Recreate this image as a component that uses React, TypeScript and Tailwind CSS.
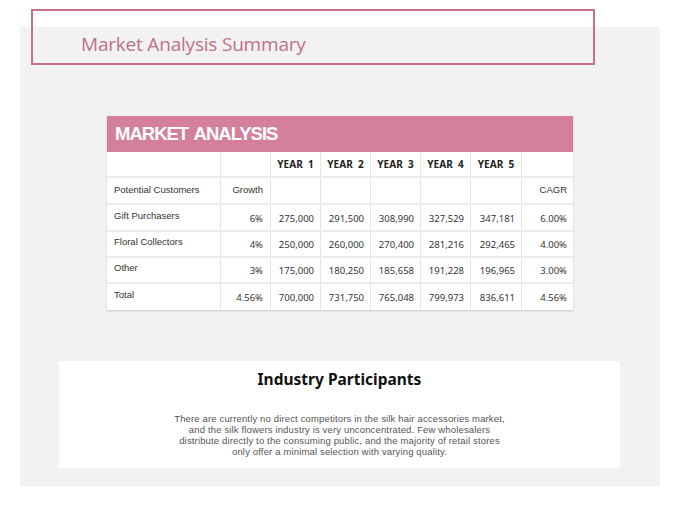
import React from 'react'

const years = ['YEAR 1', 'YEAR 2', 'YEAR 3', 'YEAR 4', 'YEAR 5']

const rows = [
  { name: 'Gift Purchasers', growth: '6%', values: ['275,000', '291,500', '308,990', '327,529', '347,181'], cagr: '6.00%' },
  { name: 'Floral Collectors', growth: '4%', values: ['250,000', '260,000', '270,400', '281,216', '292,465'], cagr: '4.00%' },
  { name: 'Other', growth: '3%', values: ['175,000', '180,250', '185,658', '191,228', '196,965'], cagr: '3.00%' },
  { name: 'Total', growth: '4.56%', values: ['700,000', '731,750', '765,048', '799,973', '836,611'], cagr: '4.56%' },
]

const cols = 'grid grid-cols-[114px_50px_50px_50px_50px_50px_51px_51px]'
const cell = 'border-r border-[#e6e6e6] last:border-r-0 flex items-center'

function MarketTable() {
  return (
    <div className="w-[466px] bg-white shadow-[0_1px_2px_rgba(0,0,0,0.18)]">
      <div className="h-[36px] bg-[#d47f9c] flex items-center pl-[8px]">
        <span className="text-white font-bold text-[18.5px] tracking-[-1px] [word-spacing:2px] font-['Liberation_Sans',Arial,sans-serif]">
          MARKET ANALYSIS
        </span>
      </div>
      <div className={`${cols} h-[26px] border-b-2 border-[#ececec]`}>
        <div className={cell} />
        <div className={cell} />
        {years.map((y) => (
          <div key={y} className={`${cell} justify-center text-[10px] font-bold text-[#222] font-['Noto_Sans',sans-serif]`}>
            {y.replace(' ', '\u00a0\u00a0')}
          </div>
        ))}
        <div className={cell} />
      </div>
      <div className={`${cols} h-[27px] border-b-2 border-[#ececec] text-[9.5px] text-[#333] font-['Liberation_Sans',Arial,sans-serif]`}>
        <div className={`${cell} pl-[7px]`}>Potential Customers</div>
        <div className={`${cell} justify-end pr-[7px]`}>Growth</div>
        {years.map((y) => (
          <div key={y} className={cell} />
        ))}
        <div className={`${cell} justify-end pr-[6px]`}>CAGR</div>
      </div>
      {rows.map((r, i) => (
        <div
          key={r.name}
          className={`${cols} ${i === 0 ? 'h-[27px]' : 'h-[26px]'} ${i < rows.length - 1 ? 'border-b-2 border-[#ececec]' : ''} text-[9.5px] text-[#333]`}
        >
          <div className={`${cell} pl-[7px] pb-[3px] font-['Liberation_Sans',Arial,sans-serif]`}>{r.name}</div>
          <div className={`${cell} justify-end pr-[7px] pt-[3px] font-['Noto_Sans',sans-serif]`}>{r.growth}</div>
          {r.values.map((v, j) => (
            <div key={j} className={`${cell} justify-end pr-[6px] pt-[3px] font-['Noto_Sans',sans-serif]`}>
              {v}
            </div>
          ))}
          <div className={`${cell} justify-end pr-[6px] pt-[3px] font-['Noto_Sans',sans-serif]`}>{r.cagr}</div>
        </div>
      ))}
    </div>
  )
}

export default function App() {
  return (
    <div className="relative w-[680px] h-[510px] bg-white">
      <div className="absolute left-[31px] top-[9px] w-[564px] h-[56px] border-2 border-[#c4718f] z-10 flex items-center pl-[48px] pt-[14px]">
        <span className="text-[19px] text-[#c06f8d] font-['Open_Sans',sans-serif] tracking-[-0.2px]">
          Market Analysis Summary
        </span>
      </div>
      <div className="pt-[27px] pl-[20px]">
        <div className="w-[640px] h-[459px] bg-[#f2f2f2] flex flex-col">
          <div className="pt-[89px] pl-[87px]">
            <MarketTable />
          </div>
          <div className="mt-[51px] ml-[39px] w-[561px] h-[107px] bg-white flex flex-col items-center">
            <h2 className="mt-[7px] text-[15.5px] font-bold text-[#111] font-['Noto_Sans',sans-serif]">
              Industry Participants
            </h2>
            <p className="mt-[22px] whitespace-nowrap text-center text-[9.5px] leading-[11px] tracking-[0.15px] text-[#555] font-['Liberation_Sans',Arial,sans-serif]">
              There are currently no direct competitors in the silk hair accessories market,
              <br />
              and the silk flowers industry is very unconcentrated. Few wholesalers
              <br />
              distribute directly to the consuming public, and the majority of retail stores
              <br />
              only offer a minimal selection with varying quality.
            </p>
          </div>
        </div>
      </div>
    </div>
  )
}
